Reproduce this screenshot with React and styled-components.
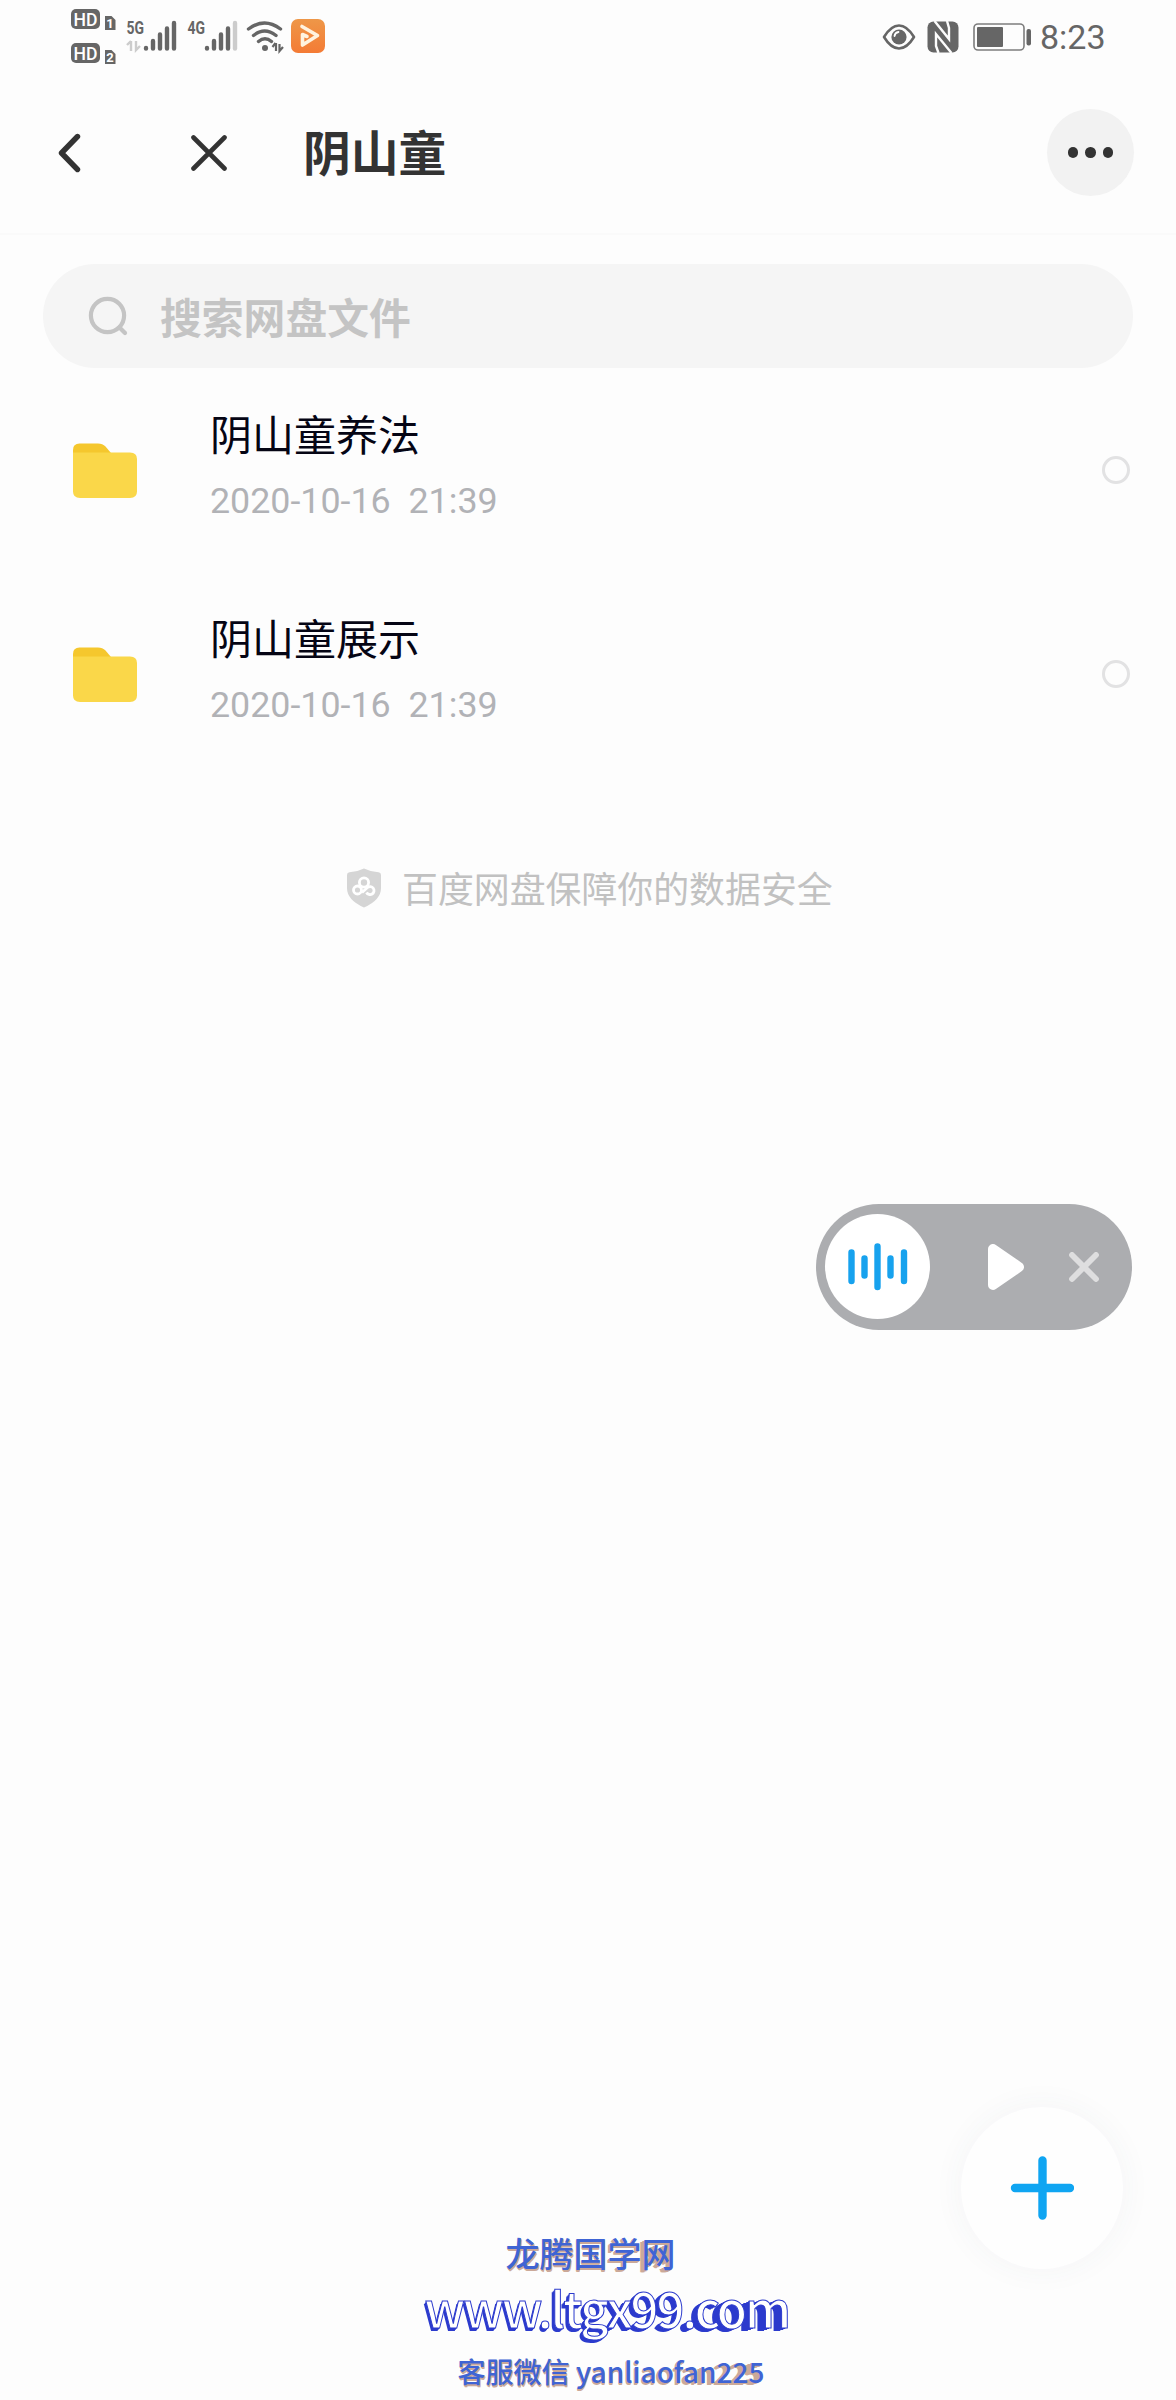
import React from 'react';
import styled, { createGlobalStyle } from 'styled-components';

const files = [
  { name: '阴山童养法', date: '2020-10-16  21:39' },
  { name: '阴山童展示', date: '2020-10-16  21:39' },
];

const App = () => {
  return (
    <Page>
      <GlobalStyle />
      <StatusBar>
        <StatusIcons />
        <StatusRight>
          <EyeIcon />
          <NfcIcon />
          <BatteryIcon />
          <Clock>8:23</Clock>
        </StatusRight>
      </StatusBar>
      <NavBar>
        <BackIcon />
        <CloseIcon />
        <Title>阴山童</Title>
        <MoreButton>
          <i />
          <i />
          <i />
        </MoreButton>
      </NavBar>
      <SearchBox>
        <SearchIcon />
        <span>搜索网盘文件</span>
      </SearchBox>
      <FileList>
        {files.map((file) => (
          <FileRow key={file.name}>
            <FolderIcon />
            <FileInfo>
              <FileName>{file.name}</FileName>
              <FileDate>{file.date}</FileDate>
            </FileInfo>
            <Radio />
          </FileRow>
        ))}
      </FileList>
      <Safety>
        <ShieldIcon />
        <span>百度网盘保障你的数据安全</span>
      </Safety>
      <Player>
        <Disc>
          <WaveIcon />
        </Disc>
        <PlayIcon />
        <StopIcon />
      </Player>
      <AddButton>
        <PlusIcon />
      </AddButton>
      <Footer>
        <SiteName><DeepText text="龙腾国学网" from={1} to={-4} color="#cba999" /></SiteName>
        <SiteUrl><DeepText text="www.ltgx99.com" from={-2} to={-8} drop={3} color="#2c3bcd" /></SiteUrl>
        <Contact><DeepText text="客服微信 yanliaofan225" from={1} to={-6} color="#cba999" /></Contact>
      </Footer>
    </Page>
  );
};

// each letter gets its own depth, leaning further left along the line
const DeepText = ({ text, from, to, drop = 2, color }) => {
  const chars = text.split('');
  return chars.map((char, i) => (
    <Letter
      key={i}
      $level={chars.length - i}
      $shift={Math.round(from + (to - from) * (i / (chars.length - 1)) ** 2)}
      $drop={drop}
      $color={color}
    >
      {char}
    </Letter>
  ));
};

const depth = ({ $shift, $drop, $color }) => {
  const steps = Math.max(Math.abs($shift), 3);
  return Array.from({ length: steps }, (_, i) => {
    const t = (i + 1) / steps;
    return `${($shift * t).toFixed(1)}px ${($drop * t).toFixed(1)}px 0 ${$color}`;
  }).join(', ');
};

const StatusIcons = () => (
  <svg width="262" height="80" viewBox="68 0 262 80" fill="#666">
    {[9, 43].map((y, i) => (
      <g key={y}>
        <rect x="71" y={y} width="29" height="20" rx="5" />
        <text x="85.5" y={y + 16.5} fill="#fff" fontSize="19" fontWeight="500" textAnchor="middle" fontFamily="Roboto" textLength="24" lengthAdjust="spacingAndGlyphs">HD</text>
        <path d={`M105 ${y + 7}h6.500l4 4v10h-10.500v-14z`} />
        <text x="110" y={y + 19} fill="#fff" fontSize="13" fontWeight="700" textAnchor="middle" fontFamily="Roboto">{i + 1}</text>
      </g>
    ))}
    <text x="126.5" y="34" fontSize="18" fontWeight="700" fontFamily="Roboto" textLength="17.5" lengthAdjust="spacingAndGlyphs">5G</text>
    <path d="M131 41v10M127 45l4-4M136 41v9l4-4" fill="none" stroke="#ccc" strokeWidth="2.4" />
    <g stroke="#666" strokeWidth="4.4" strokeLinecap="round">
      <path d="M146 48v0.5M153 41v7.5M160 34.5v14M167 28.5v20M174 23v25.5" />
      <path d="M207 48v0.5M214 41v7.5M221 34.5v14M228 28.5v20" />
      <path d="M235 23v25.5" stroke="#ccc" />
    </g>
    <text x="187.5" y="34" fontSize="18" fontWeight="700" fontFamily="Roboto" textLength="17.5" lengthAdjust="spacingAndGlyphs">4G</text>
    <g fill="none" stroke="#666" strokeWidth="3.4" strokeLinecap="round">
      <path d="M248.5 29q16-12 32 0M253.5 35.5q11-9 22.500 0M258.5 41.500q6.500-5.500 13 0" />
    </g>
    <circle cx="265" cy="48" r="3" />
    <path d="M276 43v8M272.500 47l3-4M279.500 44v7l3.500-4" fill="none" stroke="#666" strokeWidth="2.200" />
    <defs>
      <linearGradient id="app" x1="0" y1="0" x2="0" y2="1">
        <stop offset="0" stopColor="#ee9748" />
        <stop offset="1" stopColor="#f47b35" />
      </linearGradient>
    </defs>
    <rect x="291" y="19" width="34" height="34" rx="7" fill="url(#app)" />
    <path d="M302 26.500L317.500 35.500 302.500 45V34.500l4.500 2" fill="none" stroke="#fff3df" strokeWidth="3.600" strokeLinecap="round" strokeLinejoin="round" />
  </svg>
);

const EyeIcon = () => (
  <svg width="34" height="28" viewBox="0 0 34 28">
    <path d="M2 14Q9 2.500 17 2.500T32 14Q25 25.500 17 25.500T2 14z" fill="none" stroke="#666" strokeWidth="2.600" strokeLinejoin="round" />
    <circle cx="17" cy="14" r="7.600" fill="#666" />
    <path d="M12.500 13q.5-3.500 4-4" fill="none" stroke="#fff" strokeWidth="1.800" strokeLinecap="round" />
  </svg>
);

const NfcIcon = () => (
  <svg width="32" height="32" viewBox="0 0 32 32">
    <rect x=".5" y=".5" width="31" height="31" rx="6" fill="#666" />
    <path d="M7.500 0L22 18V7L20 0M24.500 32L9 13v12l2.500 7" fill="none" stroke="#fdfdfd" strokeWidth="2.400" />
  </svg>
);

const BatteryIcon = () => (
  <svg width="58" height="28" viewBox="0 0 58 28">
    <rect x="1" y="1" width="50" height="26" rx="4" fill="none" stroke="#7d7d7d" strokeWidth="1.600" />
    <rect x="4" y="4" width="26" height="20" rx="1" fill="#666" />
    <rect x="53.500" y="6" width="4.500" height="16.500" rx="2" fill="#666" />
  </svg>
);

const BackIcon = () => (
  <svg width="24" height="42" viewBox="0 0 24 42">
    <path d="M20.500 4.500L4.500 21 20.500 37.500" fill="none" stroke="#333" strokeWidth="5.400" strokeLinecap="round" strokeLinejoin="round" />
  </svg>
);

const CloseIcon = () => (
  <svg width="36" height="36" viewBox="0 0 36 36">
    <path d="M2.500 2.500l31 31m0-31l-31 31" stroke="#333" strokeWidth="4.600" strokeLinecap="round" />
  </svg>
);

const SearchIcon = () => (
  <svg width="40" height="40" viewBox="0 0 40 40">
    <g fill="none" stroke="#c4c4c4" strokeWidth="4.200" strokeLinecap="round">
      <circle cx="19.500" cy="19.500" r="16.600" />
      <path d="M31.500 31.500l5.500 5.500" />
    </g>
  </svg>
);

const FolderIcon = () => (
  <svg width="64" height="56" viewBox="0 0 64 56">
    <path d="M0 7Q0 .5 6.500 .5H25q4.500 0 7.500 3l5.500 6.500V20H0z" fill="#f5c72d" />
    <path d="M0 9.500H57Q64 9.500 64 16V48.500Q64 55 57 55H7Q0 55 0 48.500z" fill="#fad749" />
  </svg>
);

const ShieldIcon = () => (
  <svg width="36" height="40" viewBox="0 0 36 40">
    <path d="M18 .5Q25 4 32.500 4.200Q35 4.500 35 7V20Q35 32 18 39.500Q1 32 1 20V7Q1 4.500 3.500 4.200Q11 4 18 .5z" fill="#d5d5d5" />
    <g fill="none" stroke="#fff" strokeWidth="2.800">
      <circle cx="18" cy="14.500" r="4.600" />
      <circle cx="11.500" cy="22" r="4" />
      <path d="M20.500 24.500a4 4 0 1 0 1-5l-5.500 5" />
    </g>
  </svg>
);

const WaveIcon = () => (
  <svg width="60" height="48" viewBox="0 0 60 48">
    <path d="M3.500 9.500v28.500M16.500 15.500v17M29.500 3.500v40.500M42.500 15.500v17M56 9.500v28.500" stroke="#17a2ee" strokeWidth="6.400" strokeLinecap="round" />
  </svg>
);

const PlayIcon = () => (
  <svg width="36" height="46" viewBox="0 0 36 46">
    <path d="M5 5v36l26-18z" fill="#fff" stroke="#fff" strokeWidth="10" strokeLinejoin="round" />
  </svg>
);

const StopIcon = () => (
  <svg width="30" height="30" viewBox="0 0 30 30">
    <path d="M3 3l24 24M27 3L3 27" stroke="#dededf" strokeWidth="5.800" strokeLinecap="round" />
  </svg>
);

const PlusIcon = () => (
  <svg width="64" height="64" viewBox="0 0 64 64">
    <path d="M32.500 4.500v55M5 32h55" stroke="#0fa5f2" strokeWidth="8.400" strokeLinecap="round" />
  </svg>
);

const GlobalStyle = createGlobalStyle`
  * {
    box-sizing: border-box;
  }
  body {
    margin: 0;
    background: #fdfdfd;
    font-family: "Noto Sans CJK SC", sans-serif;
  }
  svg {
    display: block;
    flex-shrink: 0;
  }
`;

const Page = styled.div`
  display: flex;
  flex-direction: column;
  position: relative;
  width: 1176px;
  height: 2400px;
  overflow: hidden;
`;

const StatusBar = styled.header`
  display: flex;
  justify-content: space-between;
  height: 80px;
  padding: 0 69px 0 68px;
`;

const StatusRight = styled.div`
  display: flex;
  align-items: center;
  height: 73px;
  svg + svg {
    margin-left: 11px;
  }
  svg:nth-of-type(3) {
    margin-left: 14px;
  }
`;

const Clock = styled.span`
  margin-left: 9px;
  width: 67px;
  color: #666;
  font: 400 34px/40px Roboto, sans-serif;
  white-space: nowrap;
`;

const NavBar = styled.nav`
  display: flex;
  align-items: center;
  height: 155px;
  padding: 0 42px 8px 57px;
  border-bottom: 2px solid #fafafa;
  svg + svg {
    margin-left: 110px;
  }
`;

const Title = styled.h1`
  flex: 1;
  margin: -3px 0 0 76px;
  color: #333;
  font-size: 47.8px;
  font-weight: 700;
  line-height: 60px;
`;

const MoreButton = styled.div`
  display: flex;
  align-items: center;
  justify-content: center;
  gap: 7px;
  width: 87px;
  height: 87px;
  border-radius: 50%;
  background: #f2f2f2;
  i {
    width: 10.5px;
    height: 10.5px;
    border-radius: 50%;
    background: #333;
  }
`;

const SearchBox = styled.div`
  display: flex;
  align-items: center;
  gap: 32px;
  height: 104px;
  margin: 29px 43px 0;
  padding-left: 45px;
  border-radius: 52px;
  background: #f5f5f5;
  color: #c4c4c4;
  font-size: 41.8px;
  font-weight: 700;
  line-height: 60px;
  span {
    margin-top: -1px;
  }
`;

const FileList = styled.section`
  display: flex;
  flex-direction: column;
`;

const FileRow = styled.div`
  display: flex;
  align-items: center;
  height: 204px;
  padding: 2px 46px 0 73px;
`;

const FileInfo = styled.div`
  flex: 1;
  margin: -11px 0 0 73px;
`;

const FileName = styled.div`
  color: #050514;
  font-size: 42px;
  line-height: 60px;
`;

const FileDate = styled.div`
  margin-top: 11px;
  color: #b1b2b6;
  font: 400 35.8px/54px Roboto, sans-serif;
  white-space: pre;
`;

const Radio = styled.span`
  width: 28px;
  height: 28px;
  margin-top: -2px;
  border: 3px solid #e2e2e3;
  border-radius: 50%;
`;

const Safety = styled.div`
  display: flex;
  align-items: center;
  gap: 20px;
  height: 60px;
  margin: 82px 0 0 346px;
  color: #c1c1c1;
  font-size: 35.9px;
  line-height: 52px;
  span {
    margin-top: -2px;
  }
`;

const Player = styled.div`
  position: absolute;
  top: 1204px;
  right: 44px;
  display: flex;
  align-items: center;
  width: 316px;
  height: 126px;
  padding: 0 33px 1px 9px;
  border-radius: 63px;
  background: #acadb0;
  svg + svg {
    margin-left: auto;
  }
`;

const Disc = styled.div`
  display: flex;
  align-items: center;
  justify-content: center;
  width: 105px;
  height: 105px;
  margin-right: 58px;
  border-radius: 50%;
  background: #fff;
`;

const AddButton = styled.div`
  position: absolute;
  right: 53px;
  bottom: 131px;
  display: flex;
  align-items: center;
  justify-content: center;
  width: 162px;
  height: 162px;
  border-radius: 50%;
  background: #fefefe;
  box-shadow: 0 0 32px rgba(60, 80, 90, 0.05);
`;

const Footer = styled.footer`
  display: flex;
  flex-direction: column;
  align-items: center;
  margin-top: auto;
  white-space: pre;
`;

// earlier letters stay above the depth of the ones that follow
const Letter = styled.span`
  position: relative;
  z-index: ${({ $level }) => $level};
  text-shadow: ${depth};
`;

const SiteName = styled.div`
  margin-right: -5px;
  color: #3f64d4;
  font-size: 34px;
  font-weight: 500;
  line-height: 50px;
`;

const SiteUrl = styled.div`
  margin: -2px -38px 0 0;
  color: #fff;
  font-size: 49px;
  font-weight: 500;
  line-height: 62px;
  letter-spacing: -1.9px;
  -webkit-text-stroke: 1px #2c3bcd;
`;

const Contact = styled.div`
  margin: 11px -46px 7px 0;
  color: #3f64d4;
  font-size: 28px;
  font-weight: 500;
  line-height: 44px;
`;

export default App;
